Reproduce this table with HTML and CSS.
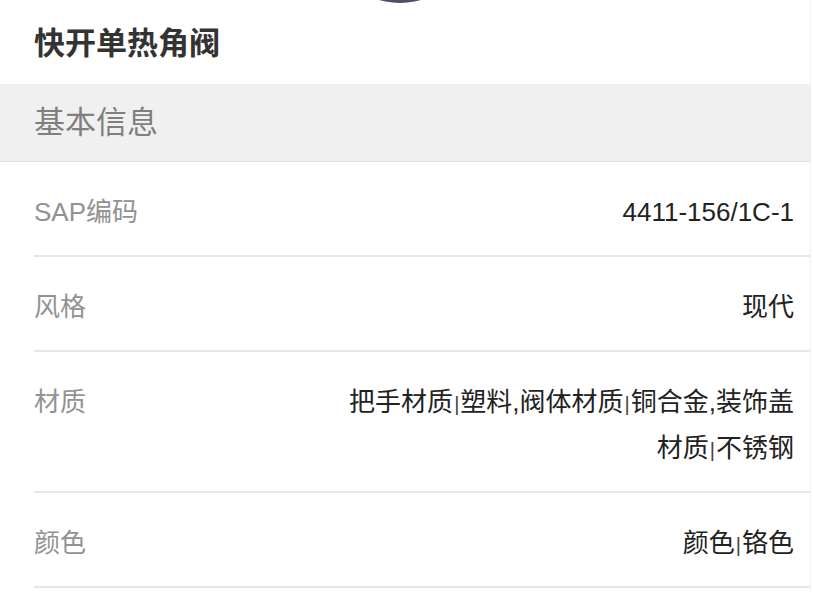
FILE: index.html
```html
<!DOCTYPE html>
<html lang="zh-CN">
<head>
    <meta charset="UTF-8">
    <meta name="viewport" content="width=device-width, initial-scale=1.0">
    <title>快开单热角阀</title>
    <link rel="stylesheet" href="styles.css">
</head>
<body>
    <div class="page">
        <div class="cover">
            <div class="cover-img"></div>
        </div>
        <h1 class="title">快开单热角阀</h1>

        <div class="section-head">基本信息</div>
        <div class="info-list">
            <div class="info-row">
                <span class="label">SAP编码</span>
                <span class="value">4411-156/1C-1</span>
            </div>
            <div class="info-row">
                <span class="label">风格</span>
                <span class="value">现代</span>
            </div>
            <div class="info-row">
                <span class="label">材质</span>
                <span class="value">把手材质<i class="sep">|</i>塑料,阀体材质<i class="sep">|</i>铜合金,装饰盖<wbr>材质<i class="sep">|</i>不锈钢</span>
            </div>
            <div class="info-row">
                <span class="label">颜色</span>
                <span class="value">颜色<i class="sep">|</i>铬色</span>
            </div>
        </div>
    </div>
</body>
</html>
```

FILE: styles.css
```css
body {
    margin: 0;
    padding: 0;
    background: #fff;
    font-family: 'Liberation Sans', 'Noto Sans CJK SC', sans-serif;
    overflow: hidden;
}

.page {
    width: 810px;
    border-right: 1px solid #f0f0f0;
    min-height: 592px;
}

.cover {
    height: 4px;
    overflow: hidden;
}

.cover-img {
    width: 150px;
    height: 150px;
    margin: -147px 0 0 325px;
    border-radius: 50%;
    background: radial-gradient(circle at 50% 100%, #4e4d63 0%, #6c6b80 60%, #a9a8b8 100%);
}

.title {
    margin: 0;
    height: 80px;
    line-height: 80px;
    padding-left: 34px;
    font-size: 31px;
    font-weight: 700;
    color: #333;
}

.section-head {
    height: 77px;
    line-height: 77px;
    padding-left: 34px;
    background: #f0f0f0;
    border-bottom: 1px solid #dcdcdc;
    font-size: 31px;
    color: #7f7f7f;
}

.info-list {
    margin-left: 34px;
}

.info-row {
    display: flex;
    justify-content: space-between;
    align-items: flex-start;
    padding: 27px 16px 20px 0;
    border-bottom: 2px solid #e6e6e6;
    font-size: 26px;
    line-height: 46px;
}

.label {
    color: #929292;
}

.value {
    max-width: 60%;
    text-align: right;
    color: #222;
}

.sep {
    font-style: normal;
    font-size: 20px;
    line-height: 1;
    font-weight: 300;
    margin: 0 1px;
    color: #444;
}
```
